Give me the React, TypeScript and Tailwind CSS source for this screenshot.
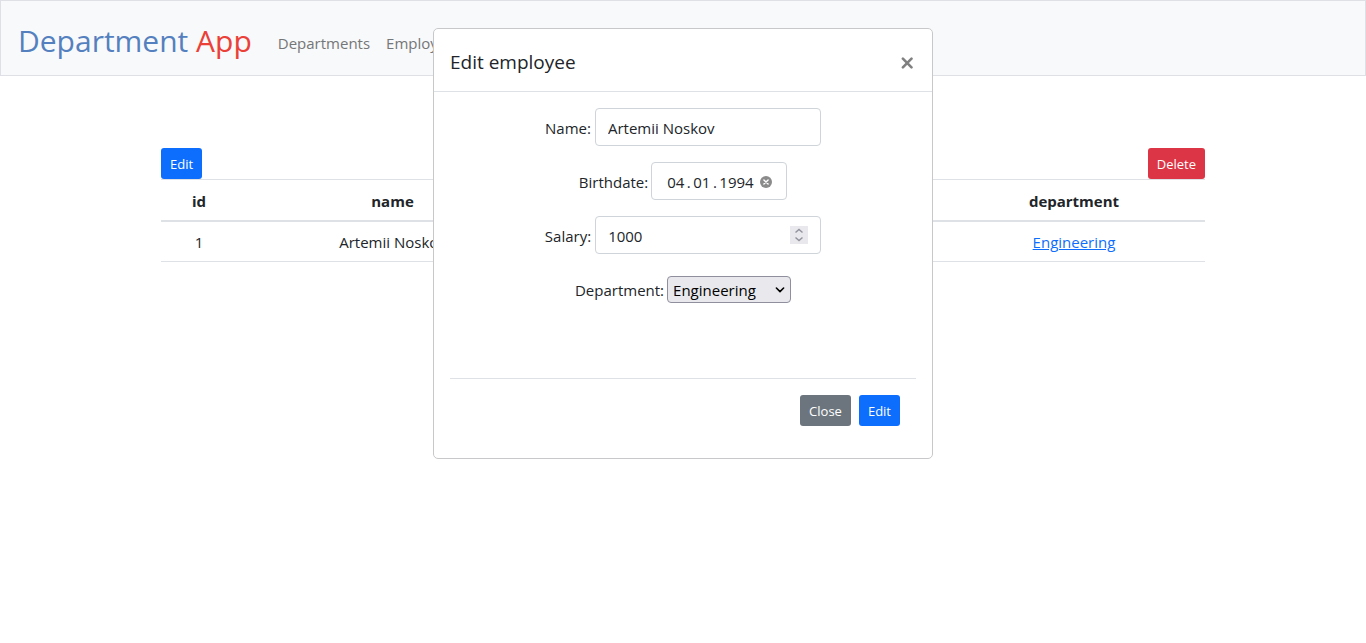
import { useState } from 'react';

function Navbar() {
  return (
    <nav className="flex h-[76px] items-center border border-[#dee0e6] bg-[#f8f9fa] pl-[17px]">
      <a href="#" className="pt-1.5 text-[30px] leading-[48px] whitespace-nowrap text-[#5480bf]">
        Department <span className="text-[#ea4038]">App</span>
      </a>
      <div className="ml-[26px] flex gap-4 pt-2.5 leading-6 text-[#757677]">
        <a href="#departments">Departments</a>
        <a href="#employees">Employees</a>
      </div>
    </nav>
  );
}

function EmployeeTable() {
  return (
    <main className="mx-auto mt-[72px] w-[1044px] max-w-full">
      <div className="flex justify-between">
        <button type="button" className="h-[31px] rounded-[3px] bg-[#0d6efd] px-[9px] pt-0.5 text-[13px] text-white">
          Edit
        </button>
        <button type="button" className="h-[31px] rounded-[3px] bg-[#dc3545] px-[9px] pt-0.5 text-[13px] text-white">
          Delete
        </button>
      </div>
      <table className="w-full table-fixed border-collapse text-center">
        <colgroup>
          <col className="w-[76px]" />
          <col className="w-[311px]" />
          <col className="w-[212px]" />
          <col />
          <col className="w-[262px]" />
        </colgroup>
        <thead>
          <tr className="h-[41px] border-t border-b-2 border-[#dee2e6] font-bold">
            <th className="pt-0.5">id</th>
            <th className="pt-0.5">name</th>
            <th className="pt-0.5">birthdate</th>
            <th className="pt-0.5">salary</th>
            <th className="pt-0.5">department</th>
          </tr>
        </thead>
        <tbody>
          <tr className="h-[41px] border-b border-[#dee2e6]">
            <td className="pt-0.5">1</td>
            <td className="pt-0.5">Artemii Noskov</td>
            <td className="pt-0.5">04.01.1994</td>
            <td className="pt-0.5">1000</td>
            <td className="pt-0.5">
              <a href="#engineering" className="text-[#0d6efd] underline">
                Engineering
              </a>
            </td>
          </tr>
        </tbody>
      </table>
    </main>
  );
}

function EditDialog() {
  const [name, setName] = useState('Artemii Noskov');
  const [birthdate, setBirthdate] = useState('04\u2009.\u200901\u2009.\u20091994');
  const [salary, setSalary] = useState(1000);

  return (
    <div
      role="dialog"
      aria-labelledby="dialog-title"
      className="fixed inset-x-0 top-7 mx-auto w-[500px] max-w-full rounded-[5px] border border-[#c8c8ca] bg-white"
    >
      <header className="flex h-[63px] items-center justify-between border-b border-[#dee2e6] px-4 pt-1">
        <h5 id="dialog-title" className="text-[19px] leading-[30px]">
          Edit employee
        </h5>
        <button type="button" aria-label="Close dialog" className="flex w-[18px] justify-center pt-0.5">
          <svg width="12" height="12" viewBox="0 0 12 12" fill="none" stroke="#808080" strokeWidth="2.6" strokeLinecap="round">
            <path d="M1.9 1.7 10.5 10.3M10.5 1.7 1.9 10.3" />
          </svg>
        </button>
      </header>
      <div className="p-4">
        <form>
          <div className="flex flex-col gap-4">
            <div className="flex h-[38px] items-center justify-center gap-1">
              <label htmlFor="name" className="pt-0.5">Name:</label>
              <input
                id="name"
                type="text"
                value={name}
                onChange={(e) => setName(e.target.value)}
                className="h-full w-[226px] rounded border border-[#ced4da] px-3 pt-0.5"
              />
            </div>
            <div className="flex h-[38px] items-center justify-center gap-[3px]">
              <label htmlFor="birthdate" className="pt-0.5">Birthdate:</label>
              <div className="flex h-full w-[136px] items-center rounded border border-[#ced4da] pr-3.5 pl-[15px]">
                <input
                  id="birthdate"
                  type="text"
                  value={birthdate}
                  onChange={(e) => setBirthdate(e.target.value)}
                  className="w-full min-w-0 pt-0.5 outline-none"
                />
                <button type="button" aria-label="Clear birthdate" onClick={() => setBirthdate('')} className="pt-0.5">
                  <svg className="block" width="12" height="12" viewBox="0 0 12 12">
                    <circle cx="6" cy="6" r="6" fill="#8b8b8b" />
                    <path d="m3.9 3.9 4.2 4.2m0-4.2L3.9 8.1" stroke="#fff" strokeWidth="1.4" strokeLinecap="round" />
                  </svg>
                </button>
              </div>
            </div>
            <div className="flex h-[38px] items-center justify-center gap-1">
              <label htmlFor="salary" className="pt-0.5">Salary:</label>
              <div className="flex h-full w-[226px] items-center rounded border border-[#ced4da] px-3">
                <input
                  id="salary"
                  type="number"
                  value={salary}
                  onChange={(e) => setSalary(Number(e.target.value))}
                  className="w-full min-w-0 [appearance:textfield] pt-0.5 outline-none [&::-webkit-inner-spin-button]:appearance-none"
                />
                <div className="flex flex-col bg-[#e9e9ed]">
                  <button type="button" aria-label="Increase salary" onClick={() => setSalary(salary + 1)}>
                    <svg className="block" width="18" height="9" viewBox="0 0 18 9" fill="none" stroke="#93939f" strokeWidth="1.5">
                      <path d="m5.5 6.5 3.5-3 3.5 3" />
                    </svg>
                  </button>
                  <button type="button" aria-label="Decrease salary" onClick={() => setSalary(salary - 1)}>
                    <svg className="block" width="18" height="9" viewBox="0 0 18 9" fill="none" stroke="#93939f" strokeWidth="1.5">
                      <path d="m5.5 2.5 3.5 3 3.5-3" />
                    </svg>
                  </button>
                </div>
              </div>
            </div>
            <div className="flex h-[38px] items-center justify-center gap-[3px]">
              <label htmlFor="department" className="pt-0.5">Department:</label>
              <div className="relative">
                <select
                  id="department"
                  className="block h-[27px] w-[124px] appearance-none rounded border border-[#8f8f9d] bg-[#e9e9ed] pt-0.5 pl-[5px] text-black"
                >
                  <option>Engineering</option>
                </select>
                <svg
                  className="pointer-events-none absolute top-2.5 right-1.5"
                  width="10"
                  height="8"
                  viewBox="0 0 10 8"
                  fill="none"
                  stroke="#000"
                  strokeWidth="1.6"
                  strokeLinecap="round"
                  strokeLinejoin="round"
                >
                  <path d="m1.4 2 3.6 3.6L8.6 2" />
                </svg>
              </div>
            </div>
          </div>
          <footer className="mt-[70px] flex justify-end gap-2 border-t border-[#dee2e6] p-4">
            <button type="button" className="h-[31px] rounded-[3px] bg-[#6c757d] px-[9px] pt-0.5 text-[13px] text-white">
              Close
            </button>
            <button type="button" className="h-[31px] rounded-[3px] bg-[#0d6efd] px-[9px] pt-0.5 text-[13px] text-white">
              Edit
            </button>
          </footer>
        </form>
      </div>
    </div>
  );
}

export default function App() {
  return (
    <div className="min-h-screen bg-white font-['Open_Sans','Noto_Sans',sans-serif] text-[15px] text-[#212529]">
      <Navbar />
      <EmployeeTable />
      <EditDialog />
    </div>
  );
}
